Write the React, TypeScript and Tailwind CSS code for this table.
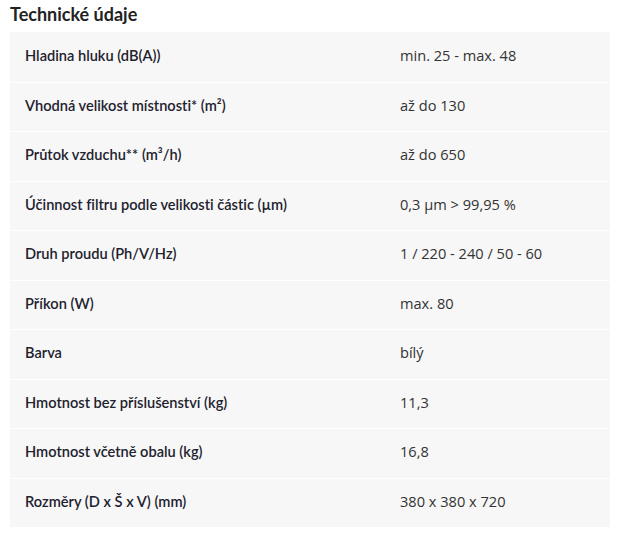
const rows: [string, string][] = [
  ["Hladina hluku (dB(A))", "min. 25 - max. 48"],
  ["Vhodná velikost místnosti* (m²)", "až do 130"],
  ["Průtok vzduchu** (m³/h)", "až do 650"],
  ["Účinnost filtru podle velikosti částic (µm)", "0,3 µm > 99,95 %"],
  ["Druh proudu (Ph/V/Hz)", "1 / 220 - 240 / 50 - 60"],
  ["Příkon (W)", "max. 80"],
  ["Barva", "bílý"],
  ["Hmotnost bez příslušenství (kg)", "11,3"],
  ["Hmotnost včetně obalu (kg)", "16,8"],
  ["Rozměry (D x Š x V) (mm)", "380 x 380 x 720"],
];

export default function App() {
  return (
    <div className="min-h-screen bg-white px-[10px] pt-[3px] [font-variant-ligatures:none]">
      <h2 className="text-[18px] leading-[22px] font-bold text-[#222] font-['Lato',sans-serif]">
        Technické údaje
      </h2>
      <div className="mt-[7px] w-[600px]">
        {rows.map(([label, value], i) => (
          <div
            key={label}
            className={`flex items-center h-[49.5px] pb-[2px] bg-[#f7f7f7] ${i > 0 ? "border-t border-white" : ""}`}
          >
            <div className="w-[390px] pl-[15px] text-[14.6px] font-semibold text-[#22222e] font-['Lato',sans-serif]">
              {label}
            </div>
            <div className="text-[14.6px] text-[#333] font-['Open_Sans',sans-serif]">{value}</div>
          </div>
        ))}
      </div>
    </div>
  );
}
